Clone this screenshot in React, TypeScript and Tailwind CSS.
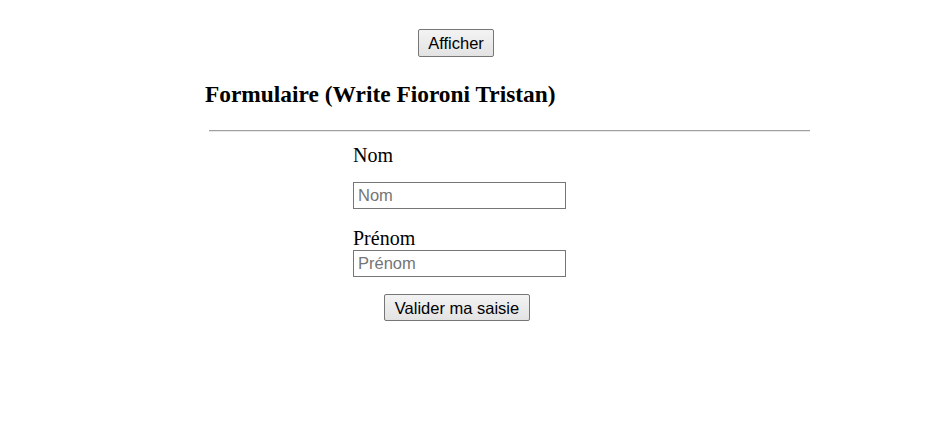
import React from "react";

export default function App() {
  const btn =
    "bg-[#efefef] border border-[#767676] rounded-[2px] leading-[18px] text-black px-[9px] py-[4px] font-['Liberation_Sans',Arial,sans-serif] bg-gradient-to-b from-[#f3f3f3] to-[#e3e3e3]";
  const input =
    "block w-[213px] h-[27px] border border-[#767676] px-[4px] text-[16.5px] font-['Liberation_Sans',Arial,sans-serif] placeholder:text-[#757575] outline-none";
  return (
    <div className="w-[926px] h-[448px] bg-white font-['Liberation_Serif','Times_New_Roman',serif] text-black">
      <div className="pt-[29px] pl-[418px] flex">
        <button className={btn + " w-[76px] h-[28px] text-[16.5px]"}>Afficher</button>
      </div>
      <h2 className="mt-[23px] ml-[205px] text-[23.4px] leading-[28px] font-bold">
        Formulaire (Write Fioroni Tristan)
      </h2>
      <div className="mt-[22px] ml-[209px] w-[601px] h-[2px] border-t border-t-[#a0a0a0] border-b border-b-[#e8e8e8]"></div>
      <div className="ml-[353px] flex flex-col">
        <label className="mt-[12px] text-[20px] leading-[23px]">Nom</label>
        <input className={input + " mt-[15px]"} placeholder="Nom" />
        <label className="mt-[18px] text-[20px] leading-[23px]">Prénom</label>
        <input className={input} placeholder="Prénom" />
      </div>
      <div className="mt-[17px] pl-[384px] flex">
        <button className={btn + " w-[146px] h-[27px] text-[16.5px]"}>Valider ma saisie</button>
      </div>
    </div>
  );
}
